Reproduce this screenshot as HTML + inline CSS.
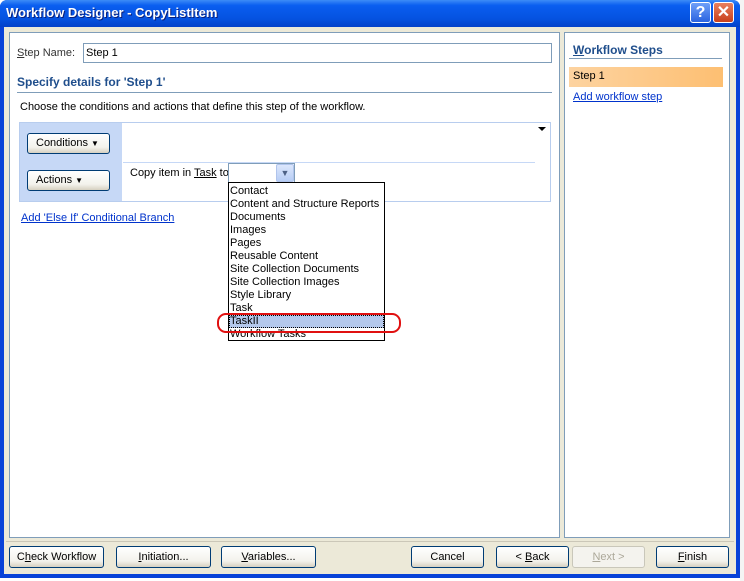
<!DOCTYPE html>
<html><head><style>
*{margin:0;padding:0;box-sizing:border-box}
body{width:744px;height:581px;background:#fff;position:relative;overflow:hidden;font-family:"Liberation Sans",sans-serif;font-size:11px;color:#000}
.a{position:absolute}
#win{left:0;top:0;width:740px;height:578px;background:#0842d8;border-radius:7px 7px 0 0}
#title{left:0;top:0;width:740px;height:27px;border-radius:7px 7px 0 0;background:linear-gradient(#3d8cf7,#0a5ef0 20%,#0552e0 70%,#0441c8)}
#title span{position:absolute;left:6px;top:5px;color:#fff;font-weight:bold;font-size:13px;text-shadow:1px 1px #0a1f7a;font-family:"Liberation Sans",sans-serif}
#body{left:4px;top:27px;width:732px;height:547px;background:#ece9d8}
.panel{background:#fff;border:1px solid #7f9db9}
.tb{width:21px;height:21px;border:1px solid #fff;border-radius:3px;color:#fff;font-weight:bold;font-size:16px;text-align:center;line-height:19px;font-family:"Liberation Sans",sans-serif}
.btn{position:absolute;top:546px;height:22px;border:1px solid #003c74;border-radius:3px;background:linear-gradient(#fff,#f3f2ec 70%,#d6d0c0);text-align:center;line-height:20px;font-size:11px}
.btn2{position:absolute;height:21px;width:83px;border:1px solid #003c74;border-radius:3px;background:linear-gradient(#fff,#f3f2ec 70%,#d6d0c0);font-size:11px;line-height:19px;padding-left:8px}
.lnk{color:#0033cc;text-decoration:underline}
.it{height:13px;line-height:13px;padding-left:1px;white-space:nowrap}
</style></head><body>
<div id="win" class="a"></div>
<div id="title" class="a"><span>Workflow Designer - CopyListItem</span></div>
<div class="a tb" style="left:690px;top:2px;background:linear-gradient(#6fa0f8,#2a63e0)">?</div>
<div class="a tb" style="left:713px;top:2px;background:linear-gradient(#e8805f,#c8401c)">✕</div>
<div id="body" class="a"></div>
<div class="a" style="left:740px;top:0;width:4px;height:581px;background:#f4f4f4"></div>

<div class="a panel" style="left:9px;top:32px;width:551px;height:506px"></div>
<div class="a panel" style="left:564px;top:32px;width:166px;height:506px"></div>

<div class="a" style="left:17px;top:47px;color:#333"><u>S</u>tep Name:</div>
<div class="a" style="left:83px;top:43px;width:469px;height:20px;border:1px solid #7f9db9;padding:2px 2px;line-height:15px">Step 1</div>
<div class="a" style="left:17px;top:75px;font-weight:bold;font-size:12px;color:#1f4e8c">Specify details for 'Step 1'</div>
<div class="a" style="left:17px;top:92px;width:535px;height:1px;background:#7f9db9"></div>
<div class="a" style="left:20px;top:101px">Choose the conditions and actions that define this step of the workflow.</div>

<div class="a" style="left:19px;top:122px;width:532px;height:80px;border:1px solid #b8cdee"></div>
<div class="a" style="left:20px;top:123px;width:102px;height:78px;background:#c6d8f6"></div>
<div class="a" style="left:123px;top:162px;width:412px;height:1px;background:#c6d8f6"></div>
<div class="a" style="left:538px;top:127px;width:0;height:0;border-left:4px solid transparent;border-right:4px solid transparent;border-top:4px solid #000"></div>
<div class="btn2 a" style="left:27px;top:133px">Conditions <span style="font-size:8px">▼</span></div>
<div class="btn2 a" style="left:27px;top:170px">Actions <span style="font-size:8px">▼</span></div>
<div class="a" style="left:130px;top:167px">Copy item in <u>Task</u> to</div>
<div class="a" style="left:228px;top:163px;width:67px;height:20px;border:1px solid #7f9db9;background:#fff"></div>
<div class="a" style="left:276px;top:164px;width:18px;height:18px;background:linear-gradient(#dce7fc,#b7cdf5);border:1px solid #b0c4ec;border-radius:2px;text-align:center;font-size:9px;line-height:16px;color:#4d6185">▼</div>
<div class="a" style="left:228px;top:182px;width:157px;height:159px;border:1px solid #000;background:#fff;padding-top:2px">
<div class="it">Contact</div><div class="it">Content and Structure Reports</div><div class="it">Documents</div><div class="it">Images</div><div class="it">Pages</div><div class="it">Reusable Content</div><div class="it">Site Collection Documents</div><div class="it">Site Collection Images</div><div class="it">Style Library</div><div class="it">Task</div><div class="it" style="background:#b4c8ec;outline:1px dotted #000;outline-offset:-1px">TaskII</div><div class="it">Workflow Tasks</div>
</div>
<div class="a" style="left:217px;top:313px;width:184px;height:20px;border:2px solid #e01010;border-radius:9px"></div>
<div class="a lnk" style="left:21px;top:212px">Add 'Else If' Conditional Branch</div>

<div class="a" style="left:573px;top:43px;font-weight:bold;font-size:12px;color:#1f4e8c"><u>W</u>orkflow Steps</div>
<div class="a" style="left:569px;top:58px;width:153px;height:1px;background:#7f9db9"></div>
<div class="a" style="left:569px;top:67px;width:154px;height:20px;background:linear-gradient(90deg,#fdd3a0,#fdbf72);padding:3px 4px">Step 1</div>
<div class="a lnk" style="left:573px;top:91px">Add workflow step</div>

<div class="a" style="left:6px;top:541px;width:728px;height:1px;background:#cbc7b8"></div>
<div class="btn" style="left:9px;width:95px">C<u>h</u>eck Workflow</div>
<div class="btn" style="left:116px;width:95px"><u>I</u>nitiation...</div>
<div class="btn" style="left:221px;width:95px"><u>V</u>ariables...</div>
<div class="btn" style="left:411px;width:73px">Cancel</div>
<div class="btn" style="left:496px;width:73px">&lt; <u>B</u>ack</div>
<div class="btn" style="left:572px;width:73px;border-color:#c9c7ba;background:#f4f3ee;color:#aca899"><u>N</u>ext &gt;</div>
<div class="btn" style="left:656px;width:73px"><u>F</u>inish</div>
</body></html>
